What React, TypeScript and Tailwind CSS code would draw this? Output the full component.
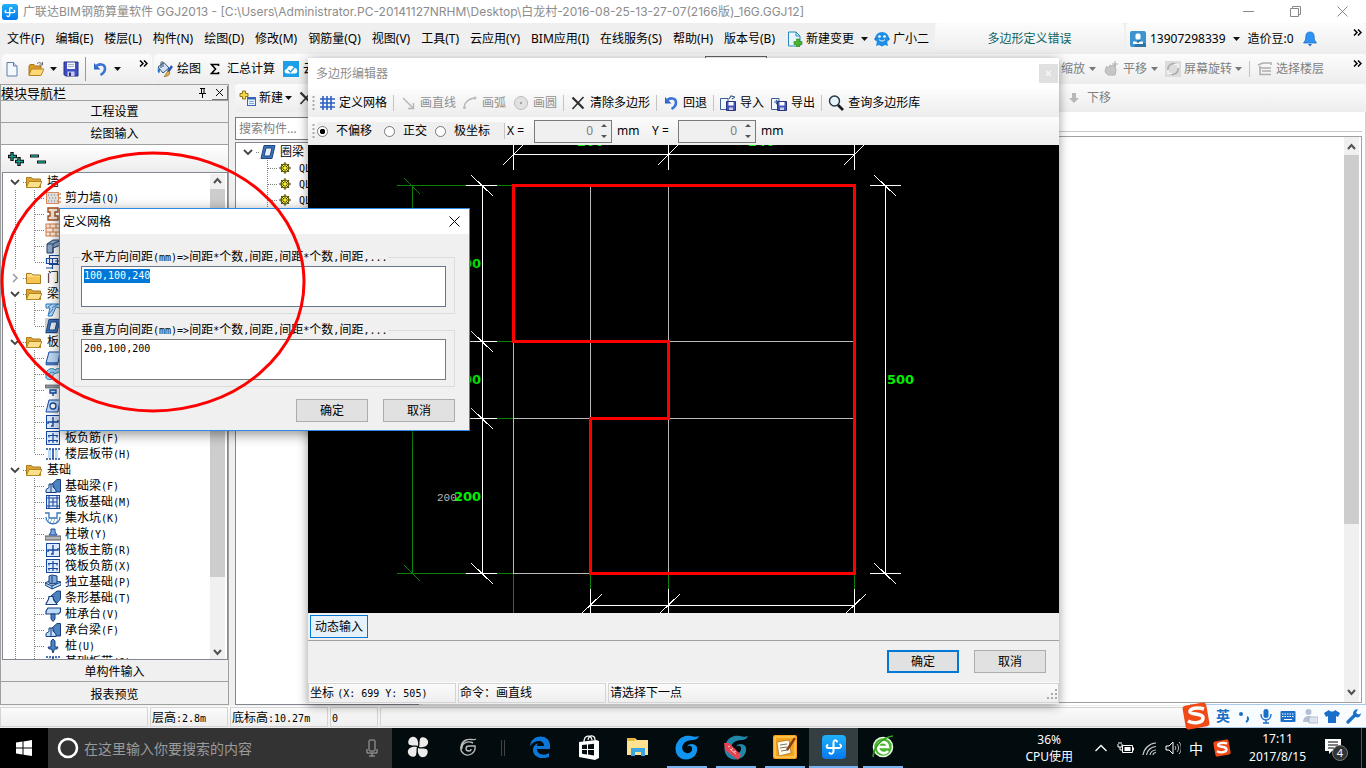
import { useEffect, useRef, type ReactNode } from "react";

/* ---------- shared bits ---------- */

function Mixed({ text }: { text: string }) {
  const parts = text.split(/([\x21-\x7e][\x20-\x7e]*)/).filter(Boolean);
  return (
    <>
      {parts.map((p, i) =>
        /[\x21-\x7e]/.test(p) ? (
          <span key={i} className="whitespace-pre font-['DejaVu_Sans_Mono',monospace] text-[10px]">{p}</span>
        ) : (
          <span key={i}>{p}</span>
        )
      )}
    </>
  );
}

function Svg({ w = 16, h = 16, children }: { w?: number; h?: number; children: ReactNode }) {
  return (
    <svg className="shrink-0" width={w} height={h} viewBox={`0 0 ${w} ${h}`} fill="none" aria-hidden="true">
      {children}
    </svg>
  );
}

const Caret = ({ color = "#111" }: { color?: string }) => (
  <Svg w={7} h={4}><path d="M0 0h7L3.5 4z" fill={color} /></Svg>
);

const More = () => (
  <Svg w={9} h={7}><path d="M1 .5l3 3-3 3M5 .5l3 3-3 3" stroke="#000" strokeWidth="1.5" /></Svg>
);

const Sep = () => <span className="h-4 w-px shrink-0 bg-[#c4c4c4]" />;

const Grip = () => (
  <Svg w={3} h={15}><path d="M1.5 0v15" stroke="#aaa" strokeWidth="2" strokeDasharray="2 2" /></Svg>
);

const AppLogo = ({ size }: { size: number }) => (
  <svg className="shrink-0" width={size} height={size} viewBox="0 0 24 24" fill="none" aria-hidden="true">
    <defs>
      <linearGradient id="lg" x1="0" y1="0" x2="0" y2="1"><stop stopColor="#20b0f8" /><stop offset="1" stopColor="#0679ee" /></linearGradient>
    </defs>
    <rect width="24" height="24" rx="4" fill="url(#lg)" />
    <path d="M15 6.500c-1-1.800-3.500-1.500-3.500 1V16c0 3-2.500 3.500-4 1.800" stroke="#fff" strokeWidth="2" strokeLinecap="round" />
    <path d="M5.500 10c-1.500 1-1 3 1 3h10.500c2.500 0 2.800-2.500 1.200-3.500" stroke="#fff" strokeWidth="2" strokeLinecap="round" />
  </svg>
);

/* ---------- toolbar icons ---------- */

const NewFile = () => <Svg><path d="M3 1.500h6.500l3.500 3.500v10H3z" fill="#f4f9ff" stroke="#5d7da8" /><path d="M9.500 1.500V5H13" fill="#cfe0f4" stroke="#5d7da8" /></Svg>;
const OpenFile = () => (
  <Svg><path d="M1 5l1-1.500h4L7.500 5H13v9H1z" fill="#d99a2b" stroke="#a87716" /><path d="M3.500 8H16l-3 6.500H1z" fill="#ffd878" stroke="#b98520" /><path d="M9 2.500c2-1.500 4-1 5 1M14.500 1v3h-3" stroke="#667" /></Svg>
);
const Save = () => (
  <Svg><path d="M1 1h14v14H2.500L1 13.500z" fill="#3f4fc4" stroke="#252f86" /><path d="M4 1.500h8V8H4z" fill="#f2f4fb" /><path d="M5 3.500h6M5 5.500h6" stroke="#a8aed0" /><path d="M4.500 10.500h7V15h-7z" fill="#c9cde8" /><path d="M6 11.500h2V15H6z" fill="#252f86" /></Svg>
);
const Undo = () => (
  <Svg><path d="M2 2v6.500h6.500z" fill="#2e62c4" /><path d="M3.500 6.500c2.500-4.500 9.500-4 9.500 1 0 3-2 5-4.500 6.500" stroke="#3b74d8" strokeWidth="2.600" /></Svg>
);
const Paint = () => (
  <Svg><path d="M1 6l6-4.500L12 7l-6 5z" fill="#cfe3f2" stroke="#35516e" /><path d="M4 7V1.500c0-1 2-1 2 0V6" stroke="#35516e" /><path d="M1 7c-1 3 0 5 1 5s1-3 1-4" fill="#2f78d0" /><path d="M15 5l-4 6" stroke="#2b57b8" strokeWidth="2.500" /><path d="M11 10l2 2c-1 3-4 3.500-6 3.500 2-1 2-3.500 4-5.500z" fill="#e6b24a" stroke="#7d6226" strokeWidth=".7" /></Svg>
);
const Cloud = () => (
  <Svg><rect width="16" height="16" fill="#1c9fe8" /><path d="M4.500 12.500c-4 0-3.500-4.500-.5-4.500.5-4 6-4.500 7-1 4-.5 4.500 5.500 1 5.500z" fill="#fff" /><path d="M5.500 9l2 2 3.500-4" stroke="#1c9fe8" strokeWidth="1.300" /></Svg>
);
const NewItem = () => (
  <Svg w={18}><path d="M3.500 1h3v2.500H9v3H6.500V9h-3V6.500H1v-3h2.500z" fill="#f6d64a" stroke="#8d7414" /><rect x="8.500" y="7.500" width="8" height="8" fill="#eaf3ff" stroke="#3567b8" /><path d="M8.500 8.500h8" stroke="#3567b8" strokeWidth="2" /><path d="M10 11.500h5M10 13.500h5" stroke="#7da6df" /></Svg>
);
const Cross = () => <Svg><path d="M2.500 2.500l11 11" stroke="#2c2c2c" strokeWidth="2.200" /><path d="M13.500 2L2.500 14" stroke="#2c2c2c" strokeWidth="1.500" /></Svg>;
const NewChange = () => (
  <Svg><path d="M1.500 1H9l4 4v10H1.500z" fill="#e6f5ff" stroke="#2989b8" /><path d="M9 1v4h4" stroke="#2989b8" /><path d="M9.500 8h3v2.500H15v3h-2.500V16h-3v-2.500H7v-3h2.500z" fill="#47b52b" stroke="#2b7d18" strokeWidth=".6" /></Svg>
);
const Mascot = () => (
  <Svg><ellipse cx="8" cy="7" rx="6.800" ry="6" fill="#1f8ee6" /><path d="M0 8l2-2v4zM16 8l-2-2v4z" fill="#1672c4" /><path d="M3 10h10l1 5-3-1-3 1.500L5 14l-3 1z" fill="#1f8ee6" /><circle cx="5.500" cy="5.500" r="1.300" fill="#fff" /><circle cx="10.500" cy="5.500" r="1.300" fill="#fff" /><path d="M5 8.500c2 2 4 2 6 0" stroke="#fff" /></Svg>
);
const Account = () => (
  <Svg><rect width="16" height="16" rx="2" fill="#3c94cf" /><path d="M8 8l8 5v3H4z" fill="#2b74a8" /><rect x="5.500" y="2.500" width="5" height="6" rx="1.500" fill="#fff" /><path d="M3 13V10.500h3l2 1.500 2-1.500h3V13z" fill="#fff" /></Svg>
);
const Bell = () => (
  <Svg><path d="M8 1c5 0 4 5 4.500 8l2 3h-13l2-3C4 6 3 1 8 1z" fill="#2f93f3" stroke="#1769bd" strokeWidth=".7" /><path d="M6 13h4l-2 2.500z" fill="#1769bd" /></Svg>
);
const Hand = () => (
  <Svg><path d="M3 7c0-2 2-2 3 0l1-3 2 1 3-1 1 5-1 5H5L2 11z" fill="#c6c6c6" stroke="#b4b4b4" /><path d="M12 0v6M9 3h6" stroke="#aaa" /></Svg>
);
const Rotate = () => (
  <Svg><rect width="16" height="16" fill="#dcdcdc" /><path d="M3 9a5.500 5.500 0 019-5M13 7a5.500 5.500 0 01-9 5" stroke="#aaa" strokeWidth="1.500" /><path d="M9 3.500h4V7M7 12.500H3V9" stroke="#f6f6f6" strokeWidth="1.400" /></Svg>
);
const Floors = () => <Svg><path d="M1 4l5-2h8v2M3 5v9M3 7h11M5 10h9M3 13.500h11" stroke="#aeaeae" strokeWidth="1.600" /></Svg>;
const GridIcon = () => <Svg><path d="M1 4h15M1 8h15M1 12h15M4 1v14M8 1v14M12 1v14" stroke="#2c5fc0" strokeWidth="1.600" /></Svg>;
const LineIcon = () => <Svg><path d="M3 3l10 10M13.500 8v5.500H8" stroke="#b4b4b4" strokeWidth="1.400" /></Svg>;
const ArcIcon = () => <Svg><path d="M2 13c0-5 4-9 10-10" stroke="#b4b4b4" strokeWidth="1.300" /><circle cx="2.500" cy="12.500" r="1.500" fill="#bbb" /><circle cx="13" cy="3" r="1.500" fill="#bbb" /></Svg>;
const CircleIcon = () => <Svg><circle cx="8" cy="8" r="6.500" fill="#e2e2e2" stroke="#bcbcbc" /><circle cx="8" cy="8" r="1.200" fill="#a4a4a4" /></Svg>;
const Transfer = ({ out }: { out?: boolean }) => (
  <Svg><path d="M.5 3.500H8v11H.5z" fill="#f4f8ff" stroke="#3f5f92" /><path d={out ? "M3 7h4M5 5l2 2-2 2" : "M9 4l2-3 4 1M12 4l3-2"} stroke="#3f5f92" strokeWidth="1.200" /><path d="M6.500 6.500h9v9h-9z" fill="#4656b4" stroke="#28337a" /><path d="M8.500 7h5v3.500h-5z" fill="#fff" /><path d="M9 12.500h4V15H9z" fill="#c9cde8" /></Svg>
);
const Search = () => <Svg><circle cx="6.500" cy="6" r="5" fill="#e4f4ff" stroke="#26323e" strokeWidth="1.400" /><path d="M10 10l5 5" stroke="#1a1a1a" strokeWidth="2.600" /></Svg>;

/* ---------- component tree ---------- */

const Folder = ({ open }: { open: boolean }) => (
  <Svg>
    <path d="M.5 13.500V3.500h5L7 5h7.500v8.500z" fill={open ? "#dca337" : "#ffdc82"} stroke="#a87c1c" />
    {open ? <path d="M3 7.500h13l-3 6H.5z" fill="#ffe08a" stroke="#b38722" /> : <path d="M1 7h13v6H1z" fill="#f6c453" />}
  </Svg>
);

function TreeIcon({ kind }: { kind: string }) {
  const b = "#1748a0";
  const l = "#bcd9f7";
  switch (kind) {
    case "shear": return <Svg><rect x="1.500" y="2.500" width="12" height="11" fill="#ddd" stroke="#d88a5c" /><path d="M3 5h10M4 8h9M3 11h10" stroke="#777" strokeDasharray="1 2" /><path d="M15 3v2M15 7v2M15 11v2" stroke="#b4571e" /></Svg>;
    case "column": return <Svg><path d="M3 2h10v4h-3v4h3v4H3v-4h2V6H3z" fill="#f2e2d4" stroke="#a34d1c" strokeWidth="1.400" /></Svg>;
    case "brick": return <Svg><rect x="1" y="2" width="14" height="12" fill="#fbeadd" stroke="#d07a48" /><path d="M1 6h14M1 10h14M5 2v4M11 2v4M8 6v4M5 10v4M11 10v4" stroke="#d07a48" /></Svg>;
    case "beamblock": return <Svg><path d="M2 6l6-4h8v5l-8 3v5H2z" fill="#8ba6c4" stroke="#22406e" /><path d="M2 6h6v9M8 6l8-4" stroke="#22406e" /></Svg>;
    case "frame": return <Svg><path d="M1.500 4.500h11v5h-11zM4.500 1.500h10v9h-10z" stroke={b} strokeWidth="1.200" /><path d="M7.500 4v11M1 14h6M10 7h6" stroke={b} strokeWidth="1.200" /></Svg>;
    case "beam": return <Svg><path d="M1 2h14v4l-4-1-4 9H3l2-8H1z" fill={l} stroke="#247abf" /><path d="M3 5l4-3M7 6l6-4M4 12l4-5" stroke="#247abf" /></Svg>;
    case "ring": return <Svg><path d="M4 1.500h11l-3 13H1z" fill="#3f72b4" stroke="#1b4484" /><path d="M6 4h6l-2 8H4z" fill="#e9eff8" stroke="#1b4484" /></Svg>;
    case "slab": return <Svg><path d="M4 2h11l-2 11H1z" fill={l} stroke={b} /><path d="M1 13h12v2H1z" fill="#5a88c8" stroke={b} strokeWidth=".6" /></Svg>;
    case "spiral": return <Svg><path d="M1 8c0-5 7-7 9-4 4-4 6 1 4 2-3 2-6 1-6 4 0 5-6 4-7 2z" fill="#9ed2f4" stroke="#2a7fb8" /><path d="M4 8c2-3 5-2 6 0" stroke="#2a7fb8" /></Svg>;
    case "cap": return <Svg><path d="M0 3h16v3H0z" fill="#8e98a2" stroke="#444" strokeWidth=".6" /><path d="M5 8h6v3H5zM8 11v3" fill={l} stroke={b} strokeWidth="1.400" /></Svg>;
    case "hole": return <Svg><path d="M4 2h11l-2 12H1z" fill={l} stroke={b} /><circle cx="8" cy="8" r="3" fill="#fff" stroke={b} strokeWidth="1.300" /></Svg>;
    case "main": return <Svg><rect x="1.500" y="1.500" width="13" height="13" fill="#deecff" stroke={b} /><path d="M8 3v9H6M3 10V8h10V6" stroke={b} strokeWidth="1.400" /></Svg>;
    case "neg": return <Svg><rect x="1.500" y="1.500" width="13" height="13" fill="#deecff" stroke={b} /><path d="M8 3v10M3 5.500h10M3 10.500h10M4 5v2.500M12 5v2.500M4 10v2.500M12 10v2.500" stroke={b} strokeWidth="1.200" /></Svg>;
    case "band": return <Svg><path d="M1 3h14M1 13h14" stroke={b} strokeWidth="1.300" strokeDasharray="2 1" /><path d="M3 4h3v8H3zM10 4h3v8h-3z" fill={l} /><path d="M8 3v10" stroke={b} strokeWidth="1.600" /></Svg>;
    case "fbeam": return <Svg><path d="M7 6l5-4.500h3.500V14H11z" fill="#4c81c0" stroke="#173f80" /><path d="M1 14.500v-3l3-2V6h4v3l3 3v2.500z" fill={l} stroke="#173f80" /><path d="M6 6v8" stroke="#173f80" /></Svg>;
    case "raft": return <Svg><rect x="1.500" y="1.500" width="13" height="13" fill="#e4edfa" stroke={b} /><path d="M4 4h8v8H4zM1 4h3M12 4h3M1 12h3M12 12h3M4 1v3M12 1v3M4 12v3M12 12v3M4 8h8M8 4v8" stroke={b} strokeWidth="1.100" /></Svg>;
    case "pit": return <Svg><path d="M0 3h4v5h8V3h4M1 7c0 9 14 9 14 0" stroke="#3976b8" strokeWidth="1.300" /><path d="M3 10h10M5 12h7" stroke="#3976b8" strokeDasharray="1 2" /></Svg>;
    case "pier": return <Svg><path d="M0 10h16v4H0z" fill="#b4b8bc" stroke="#555" /><path d="M4 9l2-3V3h4v3l2 3z" fill="#7fa9de" stroke={b} /></Svg>;
    case "iso": return <Svg><path d="M0 9l6-3 10 2v3l-9 4-7-4z" fill={l} stroke="#173f80" /><path d="M4 2l3-1 5 1v7l-5 1-3-1z" fill="#7fa9d6" stroke="#173f80" /><path d="M7 2v8M0 9l7 3 9-4M7 12v3" stroke="#173f80" /></Svg>;
    case "strip": return <Svg><path d="M6 6l6-5h3.500v8L11 14z" fill="#4c81c0" stroke="#173f80" /><path d="M1 14.500c0-3 3-3 3-8h4c0 5 3 5 4 8z" fill="#dfecfb" stroke="#173f80" strokeWidth="1.200" /></Svg>;
    case "pcap": return <Svg><path d="M1 5l2-3h12.500v4l-2 2H1z" fill={l} stroke="#173f80" strokeWidth="1.200" /><path d="M6 8h4v5l-2 2.500L6 13z" fill="#4c81c0" stroke="#173f80" /></Svg>;
    case "pile": return <Svg><path d="M6 3l2-2 2 2v6h3l-1 2H9.500L8 15l-1.500-4H4L3 9h3z" fill="#4d84c6" stroke="#173f80" /></Svg>;
    default: return <Svg><path d="M1 3h14v10H1z" stroke={b} /></Svg>;
  }
}

type Row = { parent?: boolean; open?: boolean; label: string; kind?: string; last?: boolean; sel?: boolean };
const rows: Row[] = [
  { parent: true, open: true, label: "墙" },
  { label: "剪力墙(Q)", kind: "shear" },
  { label: "", kind: "column" },
  { label: "", kind: "brick" },
  { label: "", kind: "beamblock" },
  { label: "", kind: "frame", last: true },
  { parent: true, open: false, label: "门" },
  { parent: true, open: true, label: "梁" },
  { label: "", kind: "beam" },
  { label: "", kind: "ring", last: true, sel: true },
  { parent: true, open: true, label: "板" },
  { label: "", kind: "slab" },
  { label: "", kind: "spiral" },
  { label: "", kind: "cap" },
  { label: "", kind: "hole" },
  { label: "", kind: "main" },
  { label: "板负筋(F)", kind: "neg" },
  { label: "楼层板带(H)", kind: "band", last: true },
  { parent: true, open: true, label: "基础" },
  { label: "基础梁(F)", kind: "fbeam" },
  { label: "筏板基础(M)", kind: "raft" },
  { label: "集水坑(K)", kind: "pit" },
  { label: "柱墩(Y)", kind: "pier" },
  { label: "筏板主筋(R)", kind: "main" },
  { label: "筏板负筋(X)", kind: "neg" },
  { label: "独立基础(P)", kind: "iso" },
  { label: "条形基础(T)", kind: "strip" },
  { label: "桩承台(V)", kind: "pcap" },
  { label: "承台梁(F)", kind: "fbeam" },
  { label: "桩(U)", kind: "pile" },
  { label: "基础板带(O)", kind: "band" },
];

function TreeRow({ row }: { row: Row }) {
  if (row.parent) {
    return (
      <li className="flex h-4 shrink-0 items-center">
        <Svg w={23}>
          {row.open ? <path d="M8 6l4 4 4-4" stroke="#444" strokeWidth="1.800" /> : <path d="M10 4l4 4-4 4" stroke="#999" strokeWidth="1.500" />}
          <path d="M20 8.500h3" stroke="#808080" strokeDasharray="1 1" />
        </Svg>
        <Folder open={!!row.open} />
        <span className="ml-[5px]">{row.label}</span>
      </li>
    );
  }
  return (
    <li className="flex h-4 shrink-0 items-center">
      <Svg w={42}>
        <path d="M12.500 0v16" stroke="#808080" strokeDasharray="1 1" />
        <path d={row.last ? "M31.500 0v8" : "M31.500 0v16"} stroke="#808080" strokeDasharray="1 1" />
        <path d="M32 8.500h10" stroke="#808080" strokeDasharray="1 1" />
      </Svg>
      <span className={row.sel ? "bg-[#d0d0d0]" : ""}><TreeIcon kind={row.kind ?? ""} /></span>
      <span className="ml-1 whitespace-nowrap"><Mixed text={row.label} /></span>
    </li>
  );
}

const ChevUp = () => <Svg w={15} h={15}><path d="M4 9l3.500-4L11 9" stroke="#505050" strokeWidth="2" /></Svg>;
const ChevDown = () => <Svg w={15} h={15}><path d="M4 6l3.500 4L11 6" stroke="#505050" strokeWidth="2" /></Svg>;

function ModulePanel() {
  const bar = "h-[22px] shrink-0 border-b border-[#a0a0a0] bg-[#f0f0f0] text-center leading-5";
  return (
    <aside className="flex w-[229px] shrink-0 flex-col border border-[#a0a0a0] text-[12px]">
      <header className="flex h-4 shrink-0 items-center justify-between border-b border-[#a0a0a0]">
        <h2 className="text-[13px] leading-4 text-black">模块导航栏</h2>
        <span className="flex items-center gap-1">
          <Svg w={12} h={12}><path d="M4 1.500h5M5.500 2v4M8 2v4M3 6.500h7M6.500 7v4" stroke="#000" /></Svg>
          <button aria-label="关闭导航栏" className="flex h-[14px] w-4 items-center justify-center border-b border-r border-[#777]"><Svg w={9} h={9}><path d="M1 1l7 7M8 1L1 8" stroke="#000" /></Svg></button>
        </span>
      </header>
      <button className={bar}>工程设置</button>
      <button className={bar}>绘图输入</button>
      <div className="flex h-[27px] shrink-0 items-center gap-[5px] bg-gradient-to-b from-white to-[#ececec] px-[6px]">
        <Svg w={17}><path d="M5 1v9M1 5.500h9M12 6v9M8 10.500h9" stroke="#111" strokeWidth="3.400" /><path d="M5 2v7M2 5.500h7M12 7v7M9 10.500h7" stroke="#14a08c" strokeWidth="1.400" /></Svg>
        <Svg w={17}><path d="M1 5h9M8 11h9" stroke="#111" strokeWidth="3.200" /><path d="M2 5h7M9 11h7" stroke="#14a08c" strokeWidth="1.400" /></Svg>
      </div>
      <div className="ml-px flex min-h-0 flex-1 border border-[#828790] bg-white pt-px">
        <ul className="flex min-w-0 flex-1 flex-col overflow-hidden leading-4">
          {rows.map((r, i) => <TreeRow key={i} row={r} />)}
        </ul>
        <div className="mr-[2px] flex w-[15px] shrink-0 flex-col bg-[#f0f0f0]">
          <ChevUp />
          <span className="w-full flex-[387] bg-[#cdcdcd]" />
          <span className="flex-[67]" />
          <ChevDown />
        </div>
      </div>
      <button className="h-[22px] shrink-0 border-b border-[#a0a0a0] bg-[#f0f0f0] pt-[3px] leading-[18px]">单构件输入</button>
      <button className="h-[22px] shrink-0 bg-[#f0f0f0] pt-[3px] leading-[18px]">报表预览</button>
    </aside>
  );
}

/* ---------- main window ---------- */

const menus = ["文件(F)", "编辑(E)", "楼层(L)", "构件(N)", "绘图(D)", "修改(M)", "钢筋量(Q)", "视图(V)", "工具(T)", "云应用(Y)", "BIM应用(I)", "在线服务(S)", "帮助(H)", "版本号(B)"];
const band = "bg-gradient-to-b from-[#fcfcfc] to-[#ededed]";

function TitleBar() {
  return (
    <header className="flex h-[23px] shrink-0 items-center bg-white pl-[2px] text-[#8c8c8c]">
      <AppLogo size={16} />
      <h1 className="ml-[5px] flex-1 truncate font-['Inter','Noto_Sans_CJK_SC',sans-serif] text-[12px] leading-5">
        广联达BIM钢筋算量软件 GGJ2013 - [C:\Users\Administrator.PC-20141127NRHM\Desktop\白龙村-2016-08-25-13-27-07(2166版)_16G.GGJ12]
      </h1>
      <div className="flex gap-9 pr-[18px]">
        <button aria-label="最小化"><Svg w={11} h={11}><path d="M0 5.500h11" stroke="#888" /></Svg></button>
        <button aria-label="还原"><Svg w={11} h={11}><path d="M.5 2.500h8v8h-8zM2.500 2.500v-2h8v8h-2" stroke="#888" /></Svg></button>
        <button aria-label="关闭"><Svg w={11} h={11}><path d="M.5 .5l10 10M10.500 .5l-10 10" stroke="#888" /></Svg></button>
      </div>
    </header>
  );
}

function MenuBar() {
  return (
    <nav className="flex h-[31px] shrink-0 items-center bg-[#efefef] text-[12px] text-black">
      <div className="flex shrink-0 items-center gap-[11px] pl-[7px]">
        {menus.map((m) => <button key={m} className="whitespace-nowrap">{m}</button>)}
      </div>
      <button className="ml-3 flex shrink-0 items-center gap-[3px] whitespace-nowrap"><NewChange />新建变更<span className="ml-1"><Caret /></span></button>
      <button className="ml-[6px] flex shrink-0 items-center gap-[3px] whitespace-nowrap"><Mascot />广小二</button>
      <div className={`ml-[6px] flex h-full min-w-0 flex-1 items-center justify-center whitespace-nowrap rounded-t ${band} text-[#0b6464]`}>多边形定义错误</div>
      <div className={`ml-[2px] flex h-full w-[240px] shrink-0 items-center whitespace-nowrap rounded-t pl-1 ${band}`}>
        <Account />
        <button className="ml-1 flex items-center gap-[7px]">13907298339 <Caret /></button>
        <span className="ml-2">造价豆:0</span>
        <span className="ml-2"><Bell /></span>
        <span className="mb-3 ml-auto mr-1"><More /></span>
      </div>
    </nav>
  );
}

function ToolBar() {
  const item = "flex items-center gap-1 whitespace-nowrap";
  return (
    <div className="flex h-[30px] shrink-0 bg-[#f0f0f0] text-[12px] text-black">
      <div className={`ml-[2px] flex w-[150px] shrink-0 items-center rounded pl-[2px] ${band}`}>
        <button aria-label="新建"><NewFile /></button>
        <button aria-label="打开" className="ml-2 flex items-center gap-[6px]"><OpenFile /><Caret /></button>
        <button aria-label="保存" className="ml-[6px]"><Save /></button>
        <span className="mx-[6px] h-6 w-px bg-[#999]" />
        <button aria-label="撤销" className="flex items-center gap-[6px]"><Undo /><Caret /></button>
        <span className="mb-3 ml-auto mr-1"><More /></span>
      </div>
      <div className={`ml-[2px] flex min-w-0 flex-1 items-center gap-2 rounded pl-[3px] ${band}`}>
        <button className={item}><Paint />绘图</button>
        <button className={item}><Svg w={12} h={14}><path d="M9.500 4V2.500H2.500L6.500 7l-4 4.500h7V10" stroke="#000" strokeWidth="1.600" /></Svg><span className="ml-[2px]">汇总计算</span></button>
        <button className={item}><Cloud />云</button>
        <input aria-label="当前楼层" readOnly className="ml-[382px] h-[26px] w-[62px] self-center border border-[#666] bg-white" />
        <div className="ml-auto flex items-center gap-[7px] text-[#808080]">
          <button className={item}>缩放<Caret color="#777" /></button>
          <button className={item}><Hand />平移<Caret color="#777" /></button>
          <button className="flex items-center gap-[3px] whitespace-nowrap"><Rotate />屏幕旋转<Caret color="#777" /></button>
          <Sep />
          <button className="flex items-center gap-[3px] whitespace-nowrap"><Floors />选择楼层</button>
        </div>
        <span className="mb-3 ml-[21px] mr-1"><More /></span>
      </div>
    </div>
  );
}

const Gear = () => (
  <Svg w={12} h={12}><circle cx="6" cy="6" r="4" fill="#f4ee3c" stroke="#4b4700" strokeWidth="1.200" /><path d="M6 0v12M0 6h12M2 2l8 8M10 2l-8 8" stroke="#4b4700" /><circle cx="6" cy="6" r="1.600" fill="#f4ee3c" /></Svg>
);

function WorkArea() {
  return (
    <section className="ml-[6px] flex min-w-0 flex-1 flex-col">
      <div className={`flex h-7 shrink-0 items-center rounded pl-1 text-[12px] text-black ${band}`}>
        <button className="flex items-center gap-[2px]"><NewItem />新建<Caret /></button>
        <button aria-label="删除" className="ml-[6px]"><Cross /></button>
        <button className="ml-auto mr-[255px] flex items-center gap-2 text-[#808080]">
          <Svg w={10} h={10}><path d="M3 0h4v5h3L5 10 0 5h3z" fill="#b8b8b8" /></Svg>下移
        </button>
      </div>
      <div className="flex min-h-0 flex-1">
        <div className="flex w-[184px] shrink-0 flex-col gap-[2px] pt-[5px]">
          <input aria-label="搜索构件" placeholder="搜索构件..." className="h-[23px] w-full border border-[#7a7a7a] bg-white pl-[3px] text-[12px] placeholder:text-[#808080]" />
          <div className="min-h-0 flex-1 border border-[#828790] bg-white pt-[1px] text-[12px] leading-4">
            <div className="flex h-4 items-center">
              <Svg w={24}><path d="M8 6l4 4 4-4" stroke="#444" strokeWidth="1.800" /><path d="M20 8.500h4" stroke="#808080" strokeDasharray="1 1" /></Svg>
              <TreeIcon kind="ring" /><span className="ml-1">圈梁</span>
            </div>
            {[0, 1, 2].map((i) => (
              <div key={i} className="flex h-4 items-center">
                <Svg w={43}><path d="M31.500 0v16M32 8.500h10" stroke="#808080" strokeDasharray="1 1" /></Svg>
                <Gear /><span className="ml-2"><Mixed text="QL" /></span>
              </div>
            ))}
          </div>
        </div>
        <div className="ml-1 flex min-w-0 flex-1 flex-col border-r border-[#d0d0d0] bg-white pb-[2px] pr-[3px]">
          <div className="h-[20px] border-b border-[#c8c8c8]" />
          <div className="mt-1 flex min-h-0 flex-1 justify-end border border-[#a0a0a0]">
            <div className="mr-[2px] flex w-[15px] flex-col bg-[#f0f0f0] py-[3px]">
              <ChevUp />
              <span className="w-full flex-[370] bg-[#cdcdcd]" />
              <span className="flex-[160]" />
              <ChevDown />
            </div>
          </div>
        </div>
      </div>
    </section>
  );
}

function StatusBar() {
  const cell = "border border-[#d4d4d4] pl-[1px] pt-[1px] leading-[18px] whitespace-nowrap";
  return (
    <footer className={`flex h-[22px] shrink-0 gap-[2px] pb-[1px] pt-[1px] text-[12px] text-black ${band}`}>
      <span className={`w-[148px] ${cell}`} />
      <span className={`w-[78px] ${cell}`}><Mixed text="层高:2.8m" /></span>
      <span className={`w-[98px] ${cell}`}><Mixed text="底标高:10.27m" /></span>
      <span className={`w-12 ${cell}`}><Mixed text="0" /></span>
      <span className={`flex-1 ${cell}`} />
    </footer>
  );
}

/* ---------- polygon editor ---------- */

const tickRows = [185, 341, 418, 573];

function Drawing() {
  return (
    <svg className="block h-[468px] w-full bg-black" viewBox="308 145 751 468" preserveAspectRatio="xMidYMid slice" fill="none" role="img" aria-label="多边形">
      <g shapeRendering="crispEdges" strokeWidth="1">
        <path stroke="#0a820a" d="M412.500 185v388M397 185.500h69M397 573.500h69M497 185.500h16M497 341.500h16M497 418.500h16M497 573.500h16M513.500 573v40M590.500 573v16M668.500 573v16M854.500 573v16M404 178l16 16M404 565l16 16" />
        <path stroke="#b9b9b9" d="M513.500 185v388M590.500 185v388M668.500 185v388M513 341.500h341M513 418.500h341M513 573.500h341" />
        <path stroke="#fff" d="M482.500 185v388M885.500 185v388M870 185.500h31M870 573.500h31M513 154.500h341M590 605.500h264M513.500 145v25M668.500 145v25M854.500 145v25M590.500 589v24M668.500 589v24M854.500 589v24" />
        {tickRows.map((y) => <path key={y} stroke="#fff" d={`M466 ${y + 0.5}h31M471 ${y - 10}l22 21`} />)}
        {[185, 573].map((y) => <path key={y} stroke="#fff" d={`M874 ${y - 10}l22 21`} />)}
        {[513, 668, 854].map((x) => <path key={x} stroke="#fff" d={`M${x - 10} 165l20 -20`} />)}
        {[590, 668, 854].map((x) => <path key={x} stroke="#fff" d={`M${x - 8} 613l20 -19`} />)}
        <path stroke="#f00" strokeWidth="3" d="M513.500 185.500h341v388h-264v-155h78v-77h-155z" />
      </g>
      <text x="437" y="501" fontSize="11" fill="#b9b9b9" fontFamily="Liberation Mono, monospace">200</text>
      <g fill="#00f000" fontSize="13" fontWeight="bold" fontFamily="DejaVu Sans, sans-serif">
        <text x="454" y="501">200</text>
        <text x="454" y="268">200</text>
        <text x="454" y="384">100</text>
        <text x="887" y="384">500</text>
        <text x="577" y="146">200</text>
        <text x="748" y="146">240</text>
      </g>
    </svg>
  );
}

function Spin({ label }: { label: string }) {
  return (
    <span className="flex h-[23px] w-[78px] shrink-0 items-center border border-[#7a7a7a] bg-[#f0f0f0] pr-1">
      <input aria-label={label} readOnly value="0" className="w-full min-w-0 bg-transparent pr-2 text-right text-[12px] text-[#808080] outline-none" />
      <Svg w={6} h={16}><path d="M0 4h6L3 1zM0 12h6l-3 3z" fill="#555" /></Svg>
    </span>
  );
}

const btn = "h-[23px] w-[72px] border border-[#adadad] bg-[#e1e1e1] text-[12px] leading-5 text-black";

function PolygonEditor() {
  const item = "flex items-center gap-1 whitespace-nowrap";
  const off = "flex items-center gap-1 whitespace-nowrap text-[#909090]";
  const radio = "m-0 size-[11px] shrink-0 appearance-none rounded-full border border-[#777] bg-white checked:bg-[radial-gradient(circle,#000_0_2.5px,#fff_3px)]";
  return (
    <section aria-label="多边形编辑器" className="absolute left-[308px] top-[58px] w-[751px] bg-[#f0f0f0] text-[12px] text-black shadow-[0_2px_10px_rgba(0,0,0,0.4)]">
      <header className="flex h-[31px] items-center justify-between bg-white pl-2 pr-[1px] text-[#8c8c8c]">
        <h2>多边形编辑器</h2>
        <button aria-label="关闭编辑器" className="flex size-[19px] items-center justify-center bg-[#e0e0e0]"><Svg w={7} h={7}><path d="M1 1l5 5M6 1L1 6" stroke="#f8f8f8" strokeWidth="1.200" /></Svg></button>
      </header>
      <div className={`flex h-[28px] items-center gap-[6px] pl-1 ${band}`}>
        <span className="-mr-[2px]"><Grip /></span>
        <button className={item}><GridIcon />定义网格</button>
        <Sep />
        <button className={off}><LineIcon />画直线</button>
        <button className={off}><ArcIcon />画弧</button>
        <button className={`ml-px ${off}`}><CircleIcon />画圆</button>
        <Sep />
        <button className={item}><Cross />清除多边形</button>
        <Sep />
        <button className={item}><Undo />回退</button>
        <Sep />
        <button className={item}><Transfer />导入</button>
        <button className={`ml-px ${item}`}><Transfer out />导出</button>
        <Sep />
        <button className={item}><Search />查询多边形库</button>
      </div>
      <div className={`flex h-[28px] items-center pl-1 ${band}`}>
        <Grip />
        <div className="ml-[2px] flex items-center gap-[8px] bg-[#efefef] pr-[14px]">
          <label className="flex items-center gap-[8px] whitespace-nowrap"><input type="radio" name="offset" defaultChecked className={radio} />不偏移</label>
          <label className="ml-1 flex items-center gap-[8px] whitespace-nowrap"><input type="radio" name="offset" className={radio} />正交</label>
          <label className="flex items-center gap-[8px] whitespace-nowrap"><input type="radio" name="offset" className={radio} />极坐标</label>
        </div>
        <Sep />
        <span className="ml-[2px] w-[27px] whitespace-nowrap">X =</span>
        <Spin label="X" />
        <span className="ml-[5px] w-[35px]">mm</span>
        <span className="w-[26px] whitespace-nowrap">Y =</span>
        <Spin label="Y" />
        <span className="ml-[5px]">mm</span>
      </div>
      <Drawing />
      <div className="flex h-[28px] items-center border-b border-[#a0a0a0] px-[2px]">
        <button className="h-[23px] border border-[#0078d7] bg-[#e5f1fb] px-1 leading-5">动态输入</button>
      </div>
      <div className="flex h-[41px] items-center justify-end gap-[15px] pr-[13px]">
        <button className="h-[23px] w-[72px] border-2 border-[#0078d7] bg-[#e1e1e1] leading-4">确定</button>
        <button className={btn}>取消</button>
      </div>
      <footer className={`flex h-[22px] items-stretch gap-[2px] pb-[1px] pt-[1px] leading-[18px] ${band}`}>
        <span className="w-[148px] whitespace-pre border border-[#d4d4d4] pl-[1px]"><Mixed text="坐标 (X: 699 Y: 505)" /></span>
        <span className="w-[148px] border border-[#d4d4d4] pl-[1px]">命令：画直线</span>
        <span className="flex flex-1 items-center justify-between border border-[#d4d4d4] pl-[1px]">
          请选择下一点
          <Svg w={12} h={14}><path d="M10 3v2M10 7v2M6 7v2M10 11v2M6 11v2M2 11v2" stroke="#aaa" strokeWidth="2" /></Svg>
        </span>
      </footer>
    </section>
  );
}

/* ---------- grid definition dialog ---------- */

function GridDialog() {
  const ref = useRef<HTMLTextAreaElement>(null);
  useEffect(() => {
    ref.current?.focus();
    ref.current?.select();
  }, []);
  const area = "block h-[41px] w-full resize-none rounded-none border bg-white pl-[2px] pt-[2px] font-['DejaVu_Sans_Mono',monospace] text-[10px] leading-[14px] text-black outline-none selection:bg-[#0078d7] selection:text-white";
  const fields = [
    { id: "hgap", title: "水平方向间距(mm)=>间距*个数,间距,间距*个数,间距,...", value: "100,100,240", border: "border-[#68768a]" },
    { id: "vgap", title: "垂直方向间距(mm)=>间距*个数,间距,间距*个数,间距,...", value: "200,100,200", border: "border-[#7a7a7a]" },
  ];
  return (
    <section role="dialog" aria-label="定义网格" className="absolute left-[59px] top-[208px] w-[411px] border border-[#2f8ae6] bg-[#f0f0f0] text-[12px] text-black shadow-[0_3px_12px_rgba(0,0,0,0.45)]">
      <header className="flex h-[25px] items-center justify-between bg-white pl-[3px] pr-[9px]">
        <h2>定义网格</h2>
        <button aria-label="关闭对话框"><Svg w={11} h={11}><path d="M.5 .5l10 10M10.500 .5l-10 10" stroke="#000" /></Svg></button>
      </header>
      <div className="flex flex-col gap-[7px] pb-2 pl-[13px] pr-[14px] pt-[14px]">
        {fields.map((f, i) => (
          <fieldset key={f.id} className="border border-[#dcdcdc] px-[7px] pb-[6px] pr-2">
            <legend className="-ml-px whitespace-nowrap px-[1px] leading-[17px]">
              <label htmlFor={f.id}><Mixed text={f.title} /></label>
            </legend>
            <textarea id={f.id} ref={i === 0 ? ref : undefined} defaultValue={f.value} className={`${area} ${f.border}`} />
          </fieldset>
        ))}
        <div className="mt-[5px] flex justify-end gap-[15px]">
          <button className={btn}>确定</button>
          <button className={btn}>取消</button>
        </div>
      </div>
    </section>
  );
}

/* ---------- input method bar ---------- */

const SogouMark = ({ size }: { size: number }) => (
  <svg className="shrink-0" width={size} height={size} viewBox="0 0 28 28" fill="none" aria-hidden="true">
    <rect x="2" y="2" width="24" height="24" rx="3" fill="#f04a16" transform="rotate(-10 14 14)" />
    <path d="M22 7c-6-2-15-1-14 3 1 3 13 1 13 6 0 5-9 6-15 3" stroke="#fff" strokeWidth="3.600" />
  </svg>
);

function ImeBar() {
  const c = "#1a6fc8";
  return (
    <div className="absolute bottom-[40px] right-0 flex h-6 items-center gap-[6px] border-y border-[#a9c8ea] bg-[#f9fcff] pr-1">
      <span className="-my-1 -ml-2"><SogouMark size={28} /></span>
      <span className="text-[14px] font-bold leading-5 text-[#1a6fc8]">英</span>
      <Svg><circle cx="5" cy="6" r="2" fill={c} /><path d="M11 9c2 1 1 4-1 5" stroke={c} strokeWidth="2" /></Svg>
      <Svg><rect x="5.500" y="1" width="5" height="9" rx="2.500" fill={c} /><path d="M3 6c0 8 10 8 10 0M8 12v3M5 15h6" stroke={c} strokeWidth="1.400" /></Svg>
      <Svg><rect x=".5" y="3" width="15" height="11" rx="1" fill={c} /><path d="M2 6h12M2 8.500h12" stroke="#fff" strokeDasharray="1.500 1" /><path d="M4 11.500h8" stroke="#fff" /></Svg>
      <Svg><circle cx="6.500" cy="4" r="3" fill="#b3bfd4" /><path d="M1 14c0-8 11-8 11 0z" fill="#b3bfd4" /><rect x="7" y="9" width="9" height="6" fill="#dde4ef" stroke="#9dabc4" strokeWidth=".7" /></Svg>
      <Svg><path d="M5 2c1 2 5 2 6 0l5 3-2 4-2-1v7H4V8L2 9 0 5z" fill={c} /></Svg>
      <Svg><path d="M2 14l7-7" stroke={c} strokeWidth="3.200" strokeLinecap="round" /><path d="M12 1.500a4 4 0 103 4l-3 1-2-2z" fill={c} /></Svg>
    </div>
  );
}

/* ---------- taskbar ---------- */

const GMark = ({ tag }: { tag?: boolean }) => (
  <Svg w={26} h={26}>
    <path d="M25 2c-2 5-6 3.500-10 4.500-7 1-9 9-4 12 4 2 8-1 7-5-1-2-3-2-5-1 2-4 9-3 10 1 1 7-4 12-11 12C4 25.500 0 18 2 11 5 3 11 1 17 2c3 1 6 1 8 0z" fill={tag ? "#2187a8" : "#1295f0"} />
    {tag && <path d="M1 9l5 0 12 12-3 5-13-10z" fill="#e84350" />}
    {tag && <path d="M5 13l2-1M8 16l2-2M11 18l2-1M7 15l6 5" stroke="#f9c9cc" />}
  </Svg>
);

function TaskItem({ name, active, running, children }: { name: string; active?: boolean; running?: boolean; children: ReactNode }) {
  return (
    <button aria-label={name} className={`flex h-10 w-[49px] shrink-0 flex-col items-center ${active ? "bg-[#343f44]" : ""}`}>
      <span className="flex flex-1 items-center">{children}</span>
      <span className={`h-[2px] ${active ? "w-full" : "w-10"} ${running || active ? "bg-[#76b3f0]" : ""}`} />
    </button>
  );
}

function TaskBar() {
  return (
    <nav className="flex h-10 shrink-0 items-center bg-[#020b0e] text-white">
      <button aria-label="开始" className="flex h-full w-12 shrink-0 items-center justify-center bg-black">
        <Svg><path d="M0 2.500l6.500-1v6H0zM7.500 1.400L16 0v7.500H7.500zM0 8.500h6.500v6L0 13.500zM7.500 8.500H16V16l-8.500-1.300z" fill="#fff" /></Svg>
      </button>
      <label className="flex h-full w-[344px] shrink-0 items-center bg-[#333] pl-2 pr-3">
        <Svg w={24} h={24}><circle cx="12" cy="12" r="9" stroke="#fff" strokeWidth="2.600" /></Svg>
        <input aria-label="搜索" placeholder="在这里输入你要搜索的内容" className="ml-1 w-full min-w-0 bg-transparent text-[14px] outline-none placeholder:text-[#9a9a9a]" />
        <Svg w={16} h={18}><rect x="5" y="1" width="6" height="11" rx="1" stroke="#aaa" /><path d="M3 10v4h10v-4M8 14v3M5 17h6" stroke="#aaa" /></Svg>
      </label>
      <span className="w-px shrink-0" />
      <TaskItem name="应用">
        <Svg w={22} h={22}>
          <path d="M11 10C12 4 9 0 5 1S0 8 3 9s6 0 8 1zM12 11c6 1 10-2 9-6s-7-5-8-2 0 6-1 8zM11 12c-1 6 2 10 6 9s5-7 2-8-6 0-8-1zM10 11C4 10 0 13 1 17s7 5 8 2 0-6 1-8z" fill="#ececec" />
        </Svg>
      </TaskItem>
      <TaskItem name="浏览器">
        <Svg w={20} h={20}><path d="M19 2c-3 2-6-1-10 1-6 3-7 11-2 14 5 3 12-1 11-8h-6c-4 0-4 5 0 5 1 0 2-1 2-2M16 6C10 3 4 7 5 12" stroke="#bbb" strokeWidth="1.400" /></Svg>
      </TaskItem>
      <span className="mx-[10px] flex shrink-0 gap-[2px]"><i className="h-4 w-px bg-[#444]" /><i className="h-4 w-px bg-[#444]" /></span>
      <TaskItem name="Edge">
        <Svg w={22} h={22}><path d="M1 10C2-2 21-3 21 10v3H8c0 6 8 7 12 4v4C12 24 4 21 4 14c0-4 3-6 5-7-1 1-1 2-1 3h7c0-7-10-6-14 0z" fill="#0b78d8" /></Svg>
      </TaskItem>
      <TaskItem name="应用商店">
        <Svg w={24} h={26}><path d="M2 8l17-2 3 1v17l-4 2-16-3z" fill="#fff" /><path d="M7 8c0-7 7-8 8-2M11 6c1-6 7-5 7 0" stroke="#fff" strokeWidth="1.300" /><path d="M5 11l5-.5V15H5zM11 10.400l6-.6V15h-6zM5 16h5v4.500l-5-.7zM11 16h6v5.500l-6-.9z" fill="#020b0e" /></Svg>
      </TaskItem>
      <TaskItem name="文件资源管理器">
        <Svg w={24} h={22}><path d="M1 2h8l2 2h11v15H1z" fill="#ffe290" /><path d="M1 2h8v3H1z" fill="#e8b83c" /><path d="M5 20v-8h14v8h-4v-4H9v4z" fill="#38a5e4" /></Svg>
      </TaskItem>
      <TaskItem name="广联达" running><GMark /></TaskItem>
      <TaskItem name="广联达新干线" running><GMark tag /></TaskItem>
      <TaskItem name="记事" running>
        <Svg w={24} h={24}><rect width="24" height="24" rx="2" fill="#f7a21a" /><path d="M2 2h20v20H2z" stroke="#ffdf7c" /><path d="M4 7l12-2 2 13-12 3z" fill="#fffbe8" stroke="#8a5a14" strokeWidth=".6" /><path d="M7 10l7-1M7 13l7-1M8 16l7-1" stroke="#777" /><path d="M22 3l-8 12" stroke="#8a3c14" strokeWidth="2.400" /></Svg>
      </TaskItem>
      <TaskItem name="钢筋算量" active><AppLogo size={24} /></TaskItem>
      <TaskItem name="360浏览器" running>
        <Svg w={24} h={26}><circle cx="12" cy="13" r="9.500" fill="#46b52c" stroke="#eaf8e4" strokeWidth="1.600" /><path d="M17 17c-3 4-10 2-10-4s9-7 10 0H8" stroke="#fff" strokeWidth="2.600" /><path d="M2 23C3 12 12 3 22 2" stroke="#2f9a1c" strokeWidth="1.600" /></Svg>
      </TaskItem>
      <div className="ml-auto flex h-full shrink-0 items-center text-[12px]">
        <div className="mr-5 text-center leading-[17px]">36%<br />CPU使用</div>
        <div className="flex items-center gap-2">
          <Svg w={16}><path d="M2.500 11L8 5.500l5.500 5.500" stroke="#fff" strokeWidth="1.300" /></Svg>
          <Svg w={17}><path d="M5.500 5.500h10v7h-10z" stroke="#fff" /><path d="M7.500 7h6v4h-6zM16 7.500h1v3h-1z" fill="#fff" /><path d="M1 4v3h4V4M2 2v2M4 2v2M3 7v3h3" stroke="#fff" /></Svg>
          <Svg w={15}><path d="M1 15A14 14 0 0114 3M4.500 15A10 10 0 0114 6.500M8 15a6 6 0 016-5M11 15a3 3 0 013-2.500" stroke="#ccc" strokeWidth="1.200" /></Svg>
          <Svg w={16}><path d="M1 6h3l4-4v12L4 10H1z" stroke="#fff" /><path d="M10 6c1 1 1 3 0 4M12 4c2 2 2 6 0 8M14 2c3 3 3 9 0 12" stroke="#bbb" /></Svg>
          <span className="text-[14px]">中</span>
          <span className="ml-[2px]"><SogouMark size={18} /></span>
        </div>
        <div className="ml-[18px] text-center leading-[18px]">17:11<br />2017/8/15</div>
        <div className="relative ml-[18px] mr-[13px]">
          <Svg w={24} h={26}><path d="M1 4h16v12H8l-3 3v-3H1z" fill="#fff" /><path d="M4 7h10M4 10h10M4 13h6" stroke="#000" /></Svg>
          <span className="absolute left-2 top-[10px] flex size-4 items-center justify-center rounded-full border border-[#777] bg-[#333] text-[11px] leading-3">4</span>
        </div>
        <span className="mr-1 h-full w-px bg-[#555]" />
      </div>
    </nav>
  );
}

export default function App() {
  return (
    <div className="relative flex h-screen w-full flex-col overflow-hidden bg-[#f0f0f0] font-['Noto_Sans','Noto_Sans_CJK_SC',sans-serif] text-black">
      <TitleBar />
      <MenuBar />
      <ToolBar />
      <main className="flex min-h-0 flex-1 pb-[1px]">
        <ModulePanel />
        <WorkArea />
      </main>
      <StatusBar />
      <TaskBar />
      <PolygonEditor />
      <GridDialog />
      <svg className="pointer-events-none absolute left-0 top-[150px]" width="308" height="264" viewBox="0 0 308 264" fill="none" aria-hidden="true">
        <ellipse cx="153" cy="132" rx="151" ry="129" stroke="#f00" strokeWidth="3" />
      </svg>
      <ImeBar />
    </div>
  );
}
